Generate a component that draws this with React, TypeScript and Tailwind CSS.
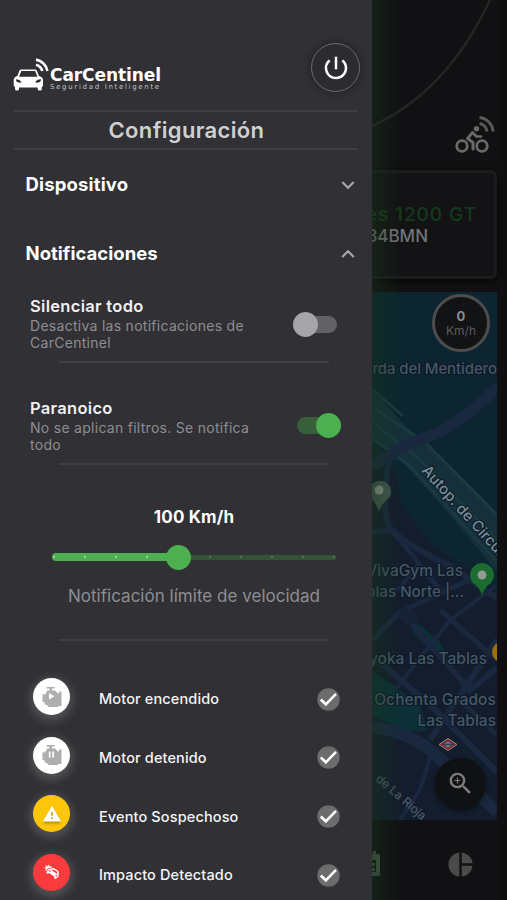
import type { ReactNode } from "react";
import {
  MdExpandLess,
  MdExpandMore,
  MdPieChart,
  MdPowerSettingsNew,
  MdWarning,
  MdZoomIn,
} from "react-icons/md";
import { FaCarCrash } from "react-icons/fa";

function Logo() {
  return (
    <div className="flex h-[34px] items-start">
      <svg width="37" height="34" viewBox="0 0 37 34" fill="none">
        <path
          fill="#fff"
          fillRule="evenodd"
          d="M6.5 12.5Q7 11.5 8.3 11.5H22Q23.3 11.5 23.8 12.6L26 18Q30 19 30 22V27.5Q29.6 29 28.8 29V31.500Q28.7 32.500 26.8 32.500T24.7 31.500V29.500H6V31.500Q6 32.500 4 32.500T2 31.500V29Q.7 28.5.7 27V22Q.7 19 4.3 18ZM8.3 13 6 18.700H24.500L22.100 13ZM3 22Q3 24.5 7.5 24.7L8.5 24Q7 21.4 3 21.200ZM28 21.200Q23.500 21.400 22.300 24L23.200 24.700Q28 24.500 28 22Z"
        />
        <path d="M23 6.7A9 9 0 0 1 29.3 13M23 1.6A14 14 0 0 1 34.4 13" stroke="#fff" strokeWidth="2.6" />
      </svg>
      <div className="flex flex-col pt-[9px] font-['DejaVu_Sans',sans-serif] text-white">
        <span className="text-[17px] leading-[16px] font-bold tracking-[-0.07px]">CarCentinel</span>
        <span className="text-[7px] leading-[8px] tracking-[1.68px] text-[#c5c5c8]">Seguridad Inteligente</span>
      </div>
    </div>
  );
}

function SwitchRow({ title, lines, on }: { title: string; lines: string[]; on?: boolean }) {
  return (
    <div className="flex h-[101.5px] flex-col pl-[30px]">
      <div className="flex h-[65px] justify-between">
        <div className="flex flex-col">
          <span className="text-[16.5px] leading-[21px] font-semibold tracking-[0.3px] text-[#f0f0f1]">{title}</span>
          {lines.map((l) => (
            <span key={l} className="text-[14px] leading-[17px] tracking-[0.28px] text-[#8e8e92]">
              {l}
            </span>
          ))}
        </div>
        {on ? (
          <div className="mt-[19px] mr-[31px] flex h-[17px] w-[44px] items-center justify-end rounded-full bg-[#375f39]">
            <span className="size-[25px] shrink-0 rounded-full bg-[#4caf50]" />
          </div>
        ) : (
          <div className="mt-[20px] mr-[35px] flex h-[17px] w-[44px] items-center rounded-full bg-[#626264]">
            <span className="size-[25px] shrink-0 rounded-full bg-[#a5a4a6]" />
          </div>
        )}
      </div>
      <div className="ml-[29px] h-[2px] w-[270px] bg-[#3f3e42]" />
    </div>
  );
}

function Engine({ state }: { state: "play" | "pause" }) {
  return (
    <svg width="22" height="24" viewBox="0 0 22 24" className="blur-[0.4px]">
      <path
        fill="#adaeaf"
        d="M5.500 2h8v1.600h-2.500V5.500h3l3 3h1V6.500h2.500V21H17v1H8l-3-2.500H3.500V17H1.500V9h1.500v1.500L6 6.500V5.500h2.500V3.600H5.500Z"
      />
      {state === "play" ? (
        <path fill="#fff" d="M8 8 13.500 11.200 8 14.500Z" />
      ) : (
        <path fill="#fff" d="M7.800 8.500h1.700v6H7.800zM11.300 8.500H13v6H11.300z" />
      )}
    </svg>
  );
}

function EventRow({ label, tone, children }: { label: string; tone: string; children: ReactNode }) {
  return (
    <div className="flex h-[58.6px] shrink-0 items-center pr-[32px] pl-[33px]">
      <div
        className={`mt-[-5px] flex size-[37px] shrink-0 items-center justify-center rounded-full shadow-[0_3px_10px_3px_rgba(255,255,255,0.17)] ${tone}`}
      >
        {children}
      </div>
      <span className="ml-[29px] grow text-[14.5px] font-[550] tracking-[0.13px] text-[#f5f5f6]">{label}</span>
      <svg width="23" height="23" viewBox="0 0 23 23" fill="none">
        <circle cx="11.5" cy="11.5" r="11.2" fill="#6c6c6c" />
        <path d="M3.800 11.500 8.800 16.300 19 5.800" stroke="#fff" strokeWidth="2.600" />
      </svg>
    </div>
  );
}

function Drawer() {
  const stops = [0, 1, 2, 3, 4, 5, 6, 7, 8, 9];
  return (
    <aside className="absolute inset-y-0 left-0 flex w-[372px] flex-col overflow-hidden bg-[#303035]">
      <div className="flex h-[110px] shrink-0 items-start justify-between pr-[12px] pl-[13px]">
        <div className="mt-[58px]">
          <Logo />
        </div>
        <div className="mt-[43px] flex size-[49px] items-center justify-center rounded-full border border-[#6c6c70] bg-[#2c2c30] shadow-[0_0_6px_2px_rgba(0,0,0,0.25)]">
          <MdPowerSettingsNew size={30} color="#fff" />
        </div>
      </div>
      <div className="mx-[14px] flex h-[40px] shrink-0 items-center justify-center border-y-2 border-[#3f3e42] pl-[1px] text-[22px] font-semibold tracking-[0.35px] text-[#d0d0d2]">
        Configuración
      </div>
      <div className="mt-[15px] flex h-[40px] shrink-0 items-center justify-between pr-[11px] pl-[25.5px] text-[18.5px] font-bold tracking-[0.16px] text-white">
        Dispositivo
        <MdExpandMore size={26} color="#a8a8ab" />
      </div>
      <div className="mt-[29px] flex h-[40px] shrink-0 items-center justify-between pr-[11px] pl-[25.5px] text-[18.5px] font-bold tracking-[0.03px] text-white">
        Notificaciones
        <MdExpandLess size={26} color="#a8a8ab" />
      </div>
      <div className="mt-[22px] shrink-0">
        <SwitchRow title="Silenciar todo" lines={["Desactiva las notificaciones de", "CarCentinel"]} />
        <SwitchRow title="Paranoico" lines={["No se aplican filtros. Se notifica", "todo"]} on />
      </div>
      <div className="mt-[7px] flex h-[24px] shrink-0 items-center justify-center pl-[16px] text-[17px] font-bold tracking-[0.15px] text-white">
        100 Km/h
      </div>
      <div className="mt-[14px] ml-[52px] flex h-[26px] w-[284px] shrink-0 items-center">
        <div className="z-10 flex h-[8px] w-[126px] items-center justify-end rounded-full bg-[#4caf50]">
          <span className="mr-[-13px] size-[25px] shrink-0 rounded-full bg-[#4caf50]" />
        </div>
        <div className="h-[5px] grow rounded-r-full bg-[#365239]" />
        <div className="absolute z-20 flex w-[284px] justify-between px-[1px]">
          {stops.map((s) => (
            <span
              key={s}
              className={`size-[2px] rounded-full ${s < 4 ? "bg-[#b5e0b7]" : s === 4 ? "bg-transparent" : "bg-[#4c8c50]"}`}
            />
          ))}
        </div>
      </div>
      <div className="mt-[15px] flex h-[24px] shrink-0 items-center justify-center pl-[16px] text-[17px] tracking-[0.02px] text-[#8e8e92]">
        Notificación límite de velocidad
      </div>
      <div className="mt-[30px] mb-[29px] ml-[59px] h-[2px] w-[270px] shrink-0 bg-[#3f3e42]" />
      <EventRow label="Motor encendido" tone="bg-white">
        <Engine state="play" />
      </EventRow>
      <EventRow label="Motor detenido" tone="bg-white">
        <Engine state="pause" />
      </EventRow>
      <EventRow label="Evento Sospechoso" tone="bg-[#fdc60a]">
        <MdWarning size={20} color="#fff" className="drop-shadow-[0_2px_1px_rgba(120,90,0,0.5)]" />
      </EventRow>
      <EventRow label="Impacto Detectado" tone="bg-[#fb3a3d]">
        <FaCarCrash size={17} color="#fff" className="mt-[-2px] scale-y-[0.8] rotate-[22deg]" />
      </EventRow>
    </aside>
  );
}

function StreetMap() {
  return (
    <svg width="125" height="528" viewBox="372 292 125 528" className="block" fontFamily="Inter, sans-serif">
      <rect x="372" y="292" width="125" height="528" fill="#0c2531" />
      <path d="M372 468 392 462 402 505 432 545 470 570 497 590V820H372Z" fill="#141d2d" />
      {/* parks */}
      <path d="M372 672 395 686 420 706 428 730 412 732 372 716Z" fill="#0c3036" />
      <path d="M414 620 440 642 448 658 440 658 412 632Z" fill="#0c3036" />
      {/* motorway */}
      <path d="M372 390 410 430 440 455 497 512V572L450 515 405 465 372 440Z" fill="#15303a" />
      <g fill="none" stroke="#193b40" strokeWidth="2.500">
        <path d="M372 389 403 416" />
        <path d="M372 407 425 442 497 515" />
        <path d="M372 422 418 458 497 540" />
        <path d="M372 438 410 466 497 562" />
      </g>
      {/* main streets */}
      <g fill="none" stroke="#1a283f">
        <path d="M499 386 Q455 428 430 436 T372 466" strokeWidth="11" />
        <path d="M391 450Q378 515 392 530T450 566L497 598" strokeWidth="6" />
        <path d="M372 532 392 530 440 590" strokeWidth="5" />
        <path d="M372 598 400 588 420 562" strokeWidth="4" />
        <path d="M402 612 470 690 497 668" strokeWidth="6" />
        <path d="M372 640 400 612 480 575" strokeWidth="5" />
        <path d="M372 655 430 705 497 772" strokeWidth="6" />
        <path d="M372 727Q410 733 430 750T497 812" strokeWidth="12" />
        <path d="M430 740 497 640" strokeWidth="6" />
        <path d="M395 690 450 620 497 585" strokeWidth="4" />
        <path d="M420 790 400 820M420 790 432 752" strokeWidth="4" />
        <path d="M440 610 497 660M460 700 497 735" strokeWidth="5" />
      </g>
      <circle cx="408" cy="616" r="9" fill="#182236" />
      {/* place pins */}
      <path d="M379 512Q377 504 371 498A11 11 0 1 1 389 498Q381 504 379 512Z" fill="#45574f" />
      <circle cx="379" cy="490" r="4.5" fill="#8d9490" />
      <path d="M482 597Q481 588 473 583A12 12 0 1 1 491 583Q483 588 482 597Z" fill="#1c6b30" />
      <circle cx="482" cy="575" r="4.5" fill="#8d9b92" />
      <circle cx="502" cy="652" r="10" fill="#a06f10" />
      <path d="M439 744.500 448 738.500 457 744.500 448 750.500Z" fill="#7a2a25" stroke="#948d90" />
      <path d="M443 744.500 448 741.500 453 744.500 448 747.500Z" fill="#858592" />
      <path d="M443 744.500H453" stroke="#29426b" strokeWidth="2" />
      {/* labels */}
      <g fill="#465866" stroke="#0d1826" strokeWidth="2" paintOrder="stroke" fontSize="15.500" fontWeight="500">
        <text x="497" y="374" textAnchor="end" fontSize="15" letterSpacing="-0.1">
          Cerda del Mentidero
        </text>
        <text x="463" y="576" textAnchor="end">VivaGym Las</text>
        <text x="464" y="597" textAnchor="end" fontSize="15.200">Tablas Norte |...</text>
        <text x="487" y="664" textAnchor="end">Toyoka Las Tablas</text>
        <text x="496" y="705" textAnchor="end" letterSpacing="0.1">Ochenta Grados</text>
        <text x="496" y="726" textAnchor="end">Las Tablas</text>
      </g>
      <text transform="translate(421 471) rotate(48)" fill="#788e98" stroke="#0d1826" strokeWidth="2" paintOrder="stroke" fontSize="15" fontWeight="500">
        Autop. de Circunvalación
      </text>
      <text transform="translate(375 780) rotate(41)" fill="#52616f" fontSize="12">
        de La Rioja
      </text>
    </svg>
  );
}

function Cyclist() {
  return (
    <g stroke="#69696a" fill="none" strokeLinejoin="round" strokeLinecap="round">
      <circle cx="462" cy="146" r="5.300" strokeWidth="2.800" />
      <circle cx="482" cy="146" r="5.300" strokeWidth="2.800" />
      <path d="M472.500 132.500 467.500 138.500 473 142.500V149" strokeWidth="3" />
      <path d="M473 133 476.500 136.500H481" strokeWidth="2.600" />
      <circle cx="476.500" cy="128.800" r="2.700" fill="#69696a" stroke="none" />
    </g>
  );
}

function DimmedHome() {
  return (
    <div className="flex h-[900px] flex-col bg-[#111113] pl-[372px]">
      <div className="flex h-[170px] shrink-0 items-start">
        <svg width="135" height="170" viewBox="372 0 135 170" fill="none">
          <path d="M372 126Q447 92 490 0" stroke="#252527" strokeWidth="2.500" />
          <Cyclist />
          <path d="M479.500 123.500A9 9 0 0 1 487 131.500M479.500 117.500A15 15 0 0 1 493 131.500" stroke="#59595a" strokeWidth="3" />
        </svg>
      </div>
      <div className="mr-[10px] flex h-[109px] shrink-0 flex-col items-end rounded-r-[6px] border-3 border-l-0 border-[#1b1b1d] bg-[#131315] pt-[31px] shadow-[0_2px_8px_rgba(0,0,0,0.8)]">
        <span className="mr-[17px] text-[19px] leading-[21px] font-medium tracking-[0.95px] whitespace-nowrap text-[#163a1c]">
          Pan-European es 1200 GT
        </span>
        <span className="mr-[66px] text-[17px] leading-[22px] font-medium whitespace-nowrap text-[#747475]">1234BMN</span>
      </div>
      <div className="relative mt-[13px] h-[528px] w-[125px] shrink-0">
        <StreetMap />
        <div className="absolute top-[2px] right-[7px] flex size-[58px] flex-col items-center justify-center rounded-full border-3 border-[#4d4d4e] bg-[#121315]">
          <span className="text-[13px] leading-[14px] font-bold text-[#8c8c8c]">0</span>
          <span className="text-[12px] leading-[15px] text-[#5b5b5c]">Km/h</span>
        </div>
        <div className="absolute right-[11px] bottom-[11px] flex size-[51px] items-center justify-center rounded-full bg-[#101113] shadow-[0_2px_5px_rgba(0,0,0,0.5)]">
          <MdZoomIn size={29} color="#7c7d7e" />
        </div>
      </div>
      <div className="flex h-[80px] items-center justify-between pt-[8px] pr-[32px]">
        <svg width="9" height="26" viewBox="0 0 9 26">
          <path fill="#47534a" d="M0 3H1V0H4V3H6Q8 3 8 5V23Q8 25 6 25H0V21H4V9H0ZM0 12H3V15H0ZM0 17H3V20H0Z" />
        </svg>
        <MdPieChart size={29} color="#4b4b4c" />
      </div>
    </div>
  );
}

export default function App() {
  return (
    <div className="relative h-[900px] w-[507px] overflow-hidden font-['Inter',sans-serif]">
      <DimmedHome />
      <div className="absolute inset-y-0 left-[372px] w-[28px] bg-linear-to-r from-[rgba(22,54,26,0.45)] to-transparent" />
      <div className="absolute inset-y-0 right-0 w-[10px] bg-linear-to-r from-transparent to-[rgba(0,0,0,0.2)]" />
      <Drawer />
    </div>
  );
}
